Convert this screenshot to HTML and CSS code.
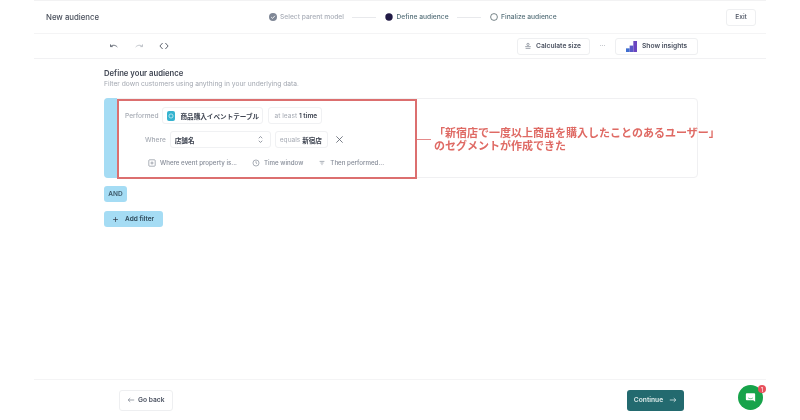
FILE: index.html
```html
<!DOCTYPE html>
<html lang="ja">
<head>
<meta charset="utf-8">
<title>New audience</title>
<link rel="stylesheet" href="styles.css">
</head>
<body>
<div class="app">
  <header class="topbar">
    <div class="title">New audience</div>
    <ol class="stepper">
      <li class="step done">
        <svg class="step-icon" viewBox="0 0 10 10"><circle cx="5" cy="5" r="4" fill="#7f8796"/><path d="M3.2 5.1l1.3 1.3 2.4-2.6" fill="none" stroke="#fff" stroke-width=".9"/></svg>
        Select parent model
      </li>
      <li class="step-line"></li>
      <li class="step current">
        <svg class="step-icon" viewBox="0 0 10 10"><circle cx="5" cy="5" r="3.7" fill="#211a45"/></svg>
        Define audience
      </li>
      <li class="step-line"></li>
      <li class="step next">
        <svg class="step-icon" viewBox="0 0 10 10"><circle cx="5" cy="5" r="3.4" fill="none" stroke="#3f5258" stroke-width=".7"/></svg>
        Finalize audience
      </li>
    </ol>
    <button class="btn exit">Exit</button>
  </header>

  <div class="toolbar">
    <div class="tool-left">
      <svg class="tool" viewBox="0 0 10 10"><path d="M1.500 3.400v2.200h2.200M1.700 5.400c1.600-1.600 4.600-1.600 6.600.6" fill="none" stroke="#5a616d" stroke-width=".9"/></svg>
      <svg class="tool" viewBox="0 0 10 10"><path d="M8.500 3.400v2.200H6.300M8.300 5.400c-1.600-1.600-4.600-1.600-6.600.6" fill="none" stroke="#b9bdc4" stroke-width=".9"/></svg>
      <svg class="tool" viewBox="0 0 10 10"><path d="M3.600 2L.9 5l2.700 3M6.400 2l2.700 3-2.700 3" fill="none" stroke="#4d5460" stroke-width=".9"/></svg>
    </div>
    <div class="tool-right">
      <button class="btn calc">
        <svg class="btn-icon" viewBox="0 0 10 10"><circle cx="5" cy="3" r="1.400" fill="none" stroke="#6a7180" stroke-width=".8"/><path d="M1.500 5.800h7M2 8h6" stroke="#6a7180" stroke-width=".8"/></svg>
        Calculate size
      </button>
      <span class="dots">···</span>
      <button class="btn insights">
        <svg class="bars" viewBox="0 0 12 12"><path d="M0 12V8h4v4z" fill="#3f6fd0"/><path d="M4 12V5h4v7z" fill="#5a58c8"/><path d="M8 12V0h4v12z" fill="#6a45c0"/></svg>
        Show insights
      </button>
    </div>
  </div>

  <main class="content">
    <h1 class="heading">Define your audience</h1>
    <p class="sub">Filter down customers using anything in your underlying data.</p>

    <section class="filter-card">
      <div class="filter-accent"></div>
      <div class="filter-body">
        <div class="row">
          <span class="label">Performed</span>
          <span class="chip event"><span class="event-icon"><svg viewBox="0 0 10 10"><circle cx="5" cy="5" r="2.600" fill="none" stroke="#d9f2fa" stroke-width=".9"/></svg></span><b>商品購入イベントテーブル</b></span>
          <span class="chip count"><span class="muted">at least</span>&nbsp;<b>1 time</b></span>
        </div>
        <div class="row where">
          <span class="label">Where</span>
          <span class="chip select"><b>店舗名</b>
            <svg class="updown" viewBox="0 0 8 10"><path d="M2 3.600L4 1.600l2 2M2 6.400l2 2 2-2" fill="none" stroke="#6a7180" stroke-width=".8"/></svg>
          </span>
          <span class="chip equals"><span class="muted">equals</span>&nbsp;<b>新宿店</b></span>
          <svg class="close" viewBox="0 0 10 10"><path d="M1.500 1.500l7 7M8.500 1.500l-7 7" stroke="#5a616d" stroke-width=".9"/></svg>
        </div>
        <div class="row actions">
          <span class="action"><svg class="act-icon" viewBox="0 0 10 10"><rect x="1" y="1" width="8" height="8" rx="1" fill="none" stroke="#7b8290" stroke-width=".8"/><path d="M5 3v4M3 5h4" stroke="#7b8290" stroke-width=".8"/></svg>Where event property is...</span>
          <span class="action"><svg class="act-icon" viewBox="0 0 10 10"><circle cx="5" cy="5" r="3.800" fill="none" stroke="#7b8290" stroke-width=".8"/><path d="M5 2.800V5l1.400.9" fill="none" stroke="#7b8290" stroke-width=".8"/></svg>Time window</span>
          <span class="action"><svg class="act-icon" viewBox="0 0 10 10"><path d="M2 3h6M3.200 5h3.600M4.400 7h1.200" stroke="#7b8290" stroke-width=".8"/></svg>Then performed...</span>
        </div>
      </div>
      <div class="highlight"></div>
      <div class="callout">
        <span class="callout-line"></span>
        <p class="callout-text">「新宿店で一度以上商品を購入したことのあるユーザー」<br>のセグメントが作成できた</p>
      </div>
    </section>

    <div class="and">AND</div>
    <button class="add-filter"><svg class="plus" viewBox="0 0 10 10"><path d="M5 1.500v7M1.500 5h7" stroke="#2f3a48" stroke-width="1"/></svg>Add filter</button>
  </main>

  <footer class="footer">
    <button class="btn back"><svg class="arrow" viewBox="0 0 10 10"><path d="M9 5H1.500M4 2.600L1.500 5 4 7.400" fill="none" stroke="#6a7180" stroke-width=".8"/></svg>Go back</button>
    <button class="continue">Continue<svg class="arrow" viewBox="0 0 10 10"><path d="M1 5h7.500M6 2.600L8.500 5 6 7.400" fill="none" stroke="#e8f2f2" stroke-width=".9"/></svg></button>
  </footer>
</div>

<div class="chat">
  <svg viewBox="0 0 14 14"><path d="M3 2.500h8a1 1 0 0 1 1 1v8.200l-2-1.700H3a1 1 0 0 1-1-1V3.500a1 1 0 0 1 1-1z" fill="#fff"/><path d="M4.500 7.500c1.500 1 3.500 1 5 0" fill="none" stroke="#17a34a" stroke-width=".7"/></svg>
  <span class="badge">1</span>
</div>
</body>
</html>
```
FILE: styles.css
```css
* { box-sizing: border-box; }
html, body { margin: 0; padding: 0; height: 420px; overflow: hidden; background: #fff; }
body {
  font-family: Inter, "Noto Sans CJK JP", sans-serif;
  font-size: 6.5px;
  color: #3b4250;
  filter: blur(0.45px);
}
ol { list-style: none; margin: 0; padding: 0; }
button { font: inherit; color: inherit; background: #fff; cursor: pointer; white-space: nowrap; }
b { font-weight: 600; }

.app {
  width: 732px;
  height: 420px;
  margin-left: 34px;
  display: flex;
  flex-direction: column;
}

.topbar {
  height: 34px;
  padding: 0 10px 0 12px;
  border-top: 1px solid #f2f2f3;
  border-bottom: 1px solid #f4f4f5;
  display: flex;
  align-items: center;
}
.title { width: 222px; font-size: 7.8px; font-weight: 500; color: #4a505c; }
.stepper { display: flex; align-items: center; font-size: 6.7px; font-weight: 500; white-space: nowrap; }
.step { display: flex; align-items: center; gap: 2px; }
.step-icon { width: 10px; height: 10px; }
.done { color: #a9aeb8; }
.current, .next { color: #56707a; }
.step-line { width: 24.5px; height: 1px; margin: 0 8px; background: #e8e9ec; }
.btn {
  height: 17px;
  padding: 0 8px;
  border: 1px solid #eeeff1;
  border-radius: 3px;
  font-size: 6.7px;
  font-weight: 600;
  color: #4a5160;
  display: inline-flex;
  align-items: center;
}
.exit { margin-left: auto; width: 30px; justify-content: center; padding: 0; font-weight: 500; }

.toolbar {
  height: 25px;
  padding: 0 68px 0 75px;
  border-bottom: 1px solid #f1f1f3;
  display: flex;
  align-items: center;
  justify-content: space-between;
}
.tool-left { display: flex; align-items: center; gap: 15px; }
.tool { width: 10px; height: 10px; display: block; }
.tool-right { display: flex; align-items: center; }
.calc { width: 73px; gap: 4px; padding: 0 0 0 6px; }
.btn-icon { width: 8px; height: 8px; }
.dots { width: 25px; text-align: center; color: #8a909b; }
.insights { width: 83px; gap: 5px; padding: 0 0 0 10px; }
.bars { width: 11px; height: 11px; }

.content {
  flex: 1;
  padding: 9px 68px 0 70px;
}
.heading { margin: 0; font-size: 7.7px; line-height: 11px; font-weight: 600; color: #3f4552; }
.sub { margin: 1px 0 9px; font-size: 6.7px; line-height: 9px; color: #a2a7b0; }

.filter-card {
  position: relative;
  height: 80px;
  border: 1px solid #f0f0f2;
  border-radius: 4px;
  display: flex;
}
.filter-accent { width: 13px; margin: -1px 0 -1px -1px; background: #a5dcf4; border-radius: 4px 0 0 4px; flex: none; }
.filter-body { flex: 1; padding: 8px 0 0 8px; }
.row { display: flex; align-items: center; gap: 4px; height: 17px; }
.label { color: #a5aab3; font-size: 6.6px; font-weight: 500; }
.chip {
  height: 17px;
  padding: 0 5px;
  border: 1px solid #f0f1f3;
  border-radius: 3px;
  display: inline-flex;
  align-items: center;
  color: #3f4552;
  font-size: 6.6px;
  white-space: nowrap;
}
.muted { color: #a5aab3; }
.event { width: 101px; padding-left: 4px; gap: 5px; margin-right: 1px; }
.event-icon {
  width: 10px; height: 10px; border-radius: 2px; background: #35b3cf;
  display: flex; align-items: center; justify-content: center;
}
.event-icon svg { width: 8px; height: 8px; }
.count { width: 54px; }
.where { margin-top: 7px; padding-left: 20px; }
.select { width: 101px; justify-content: space-between; padding: 0 6px 0 4px; }
.equals { width: 53px; padding: 0 4px; }
.updown { width: 7px; height: 9px; }
.close { width: 9px; height: 9px; margin-left: 3px; }
.actions { margin-top: 6px; padding-left: 23px; gap: 15px; color: #868c98; font-size: 6.2px; font-weight: 500; white-space: nowrap; }
.action { display: flex; align-items: center; gap: 4px; }
.act-icon { width: 8px; height: 8px; }

.highlight {
  position: absolute;
  left: 12px; top: 0;
  width: 300px; height: 80px;
  border: 2px solid #dc6f6f;
}
.callout { position: absolute; left: 312px; top: 27px; display: flex; align-items: center; }
.callout-line { width: 14px; height: 1px; background: #e58a8a; margin-right: 3px; }
.callout-text {
  margin: 0;
  font-size: 11px;
  line-height: 13px;
  font-weight: 600;
  color: #df6a64;
  white-space: nowrap;
  font-family: "Noto Sans CJK JP", sans-serif;
}

.and {
  width: 23px; height: 16px; margin-top: 8px;
  background: #a5dcf4; border-radius: 3px;
  display: flex; align-items: center; justify-content: center;
  font-weight: 600; font-size: 6.5px; color: #3b5666;
}
.add-filter {
  height: 16px; width: 59px; margin-top: 9px; padding: 0 0 0 8px;
  border: 0; background: #a5dcf4; border-radius: 3px;
  display: flex; align-items: center; gap: 6px;
  font-weight: 600; font-size: 6.5px; color: #2f4a5a;
}
.plus { width: 7px; height: 7px; }

.footer {
  height: 41px;
  padding: 0 82px 0 85px;
  border-top: 1px solid #f4f4f5;
  display: flex;
  align-items: center;
  justify-content: space-between;
}
.back { width: 54px; height: 21px; gap: 3px; padding: 0 0 0 7px; }
.arrow { width: 8px; height: 8px; }
.continue {
  width: 57px; height: 21px; border: 0; border-radius: 3px;
  background: #236a6f; color: #dcebea;
  font-size: 6.7px; font-weight: 600;
  display: flex; align-items: center; justify-content: center; gap: 6px;
}

.chat {
  position: absolute; left: 738px; top: 385px;
  width: 25px; height: 25px; border-radius: 50%;
  background: #17a34a;
  display: flex; align-items: center; justify-content: center;
}
.chat svg { width: 13px; height: 13px; }
.badge {
  position: absolute; left: 20px; top: 0;
  width: 8px; height: 8px; border-radius: 50%;
  background: #e8505b; color: #fff; font-size: 6px;
  display: flex; align-items: center; justify-content: center;
}
```
